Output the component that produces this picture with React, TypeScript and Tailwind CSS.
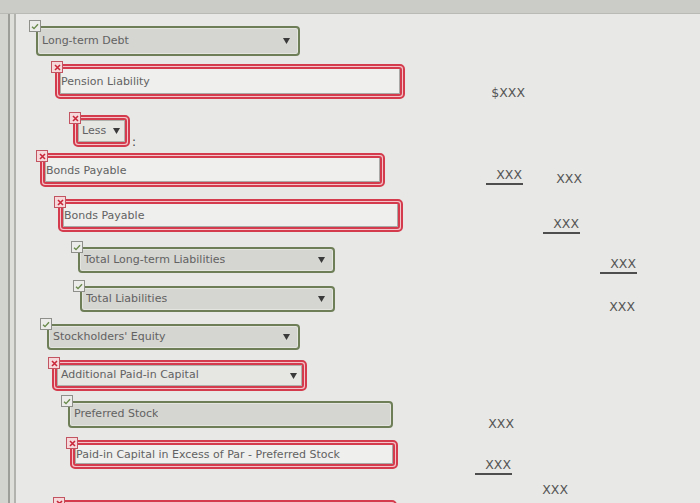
import React from 'react';

type Kind = 'gsel' | 'ginp' | 'rinp' | 'rsel';

interface Amount {
  col: 1 | 2 | 3;
  text: string;
  mt: string;
  pr: string;
  line?: boolean;
}

interface RowData {
  h: string;
  ml: string;
  mt: string;
  w: string;
  bh: string;
  kind: Kind;
  label: string;
  colon?: boolean;
  amounts?: Amount[];
}

const rows: RowData[] = [
  { h: 'h-[40px]', ml: 'ml-[20px]', mt: 'mt-[6px]', w: 'w-[264px]', bh: 'h-[30px]', kind: 'gsel', label: 'Long-term Debt' },
  {
    h: 'h-[48px]', ml: 'ml-[39px]', mt: 'mt-[4px]', w: 'w-[350px]', bh: 'h-[35px]', kind: 'rinp', label: 'Pension Liability',
    amounts: [{ col: 1, text: '$XXX', mt: 'mt-[25px]', pr: 'pr-[5px]' }],
  },
  { h: 'h-[42px]', ml: 'ml-[57px]', mt: 'mt-[7px]', w: 'w-[57px]', bh: 'h-[32px]', kind: 'rsel', label: 'Less', colon: true },
  {
    h: 'h-[45px]', ml: 'ml-[24px]', mt: 'mt-[3px]', w: 'w-[345px]', bh: 'h-[34px]', kind: 'rinp', label: 'Bonds Payable',
    amounts: [
      { col: 1, text: 'XXX', mt: 'mt-[17px]', pr: 'pr-[7px]', line: true },
      { col: 2, text: 'XXX', mt: 'mt-[21px]', pr: 'pr-[6px]' },
    ],
  },
  {
    h: 'h-[43px]', ml: 'ml-[42px]', mt: 'mt-[4px]', w: 'w-[345px]', bh: 'h-[33px]', kind: 'rinp', label: 'Bonds Payable',
    amounts: [{ col: 2, text: 'XXX', mt: 'mt-[21px]', pr: 'pr-[8px]', line: true }],
  },
  {
    h: 'h-[39px]', ml: 'ml-[62px]', mt: 'mt-[9px]', w: 'w-[257px]', bh: 'h-[26px]', kind: 'gsel', label: 'Total Long-term Liabilities',
    amounts: [{ col: 3, text: 'XXX', mt: 'mt-[18px]', pr: 'pr-[5px]', line: true }],
  },
  {
    h: 'h-[39px]', ml: 'ml-[64px]', mt: 'mt-[9px]', w: 'w-[255px]', bh: 'h-[26px]', kind: 'gsel', label: 'Total Liabilities',
    amounts: [{ col: 3, text: 'XXX', mt: 'mt-[22px]', pr: 'pr-[7px]' }],
  },
  { h: 'h-[36px]', ml: 'ml-[31px]', mt: 'mt-[8px]', w: 'w-[253px]', bh: 'h-[26px]', kind: 'gsel', label: "Stockholders' Equity" },
  { h: 'h-[41px]', ml: 'ml-[36px]', mt: 'mt-[8px]', w: 'w-[255px]', bh: 'h-[31px]', kind: 'rsel', label: 'Additional Paid-in Capital' },
  {
    h: 'h-[40px]', ml: 'ml-[52px]', mt: 'mt-[8px]', w: 'w-[325px]', bh: 'h-[27px]', kind: 'ginp', label: 'Preferred Stock',
    amounts: [{ col: 1, text: 'XXX', mt: 'mt-[23px]', pr: 'pr-[16px]' }],
  },
  {
    h: 'h-[45px]', ml: 'ml-[54px]', mt: 'mt-[7px]', w: 'w-[328px]', bh: 'h-[29px]', kind: 'rinp', label: 'Paid-in Capital in Excess of Par - Preferred Stock',
    amounts: [{ col: 1, text: 'XXX', mt: 'mt-[24px]', pr: 'pr-[18px]', line: true }],
  },
  {
    h: 'h-[60px]', ml: 'ml-[41px]', mt: 'mt-[22px]', w: 'w-[340px]', bh: 'h-[30px]', kind: 'rinp', label: '',
    amounts: [{ col: 2, text: 'XXX', mt: 'mt-[4px]', pr: 'pr-[20px]' }],
  },
];

function Arrow() {
  return (
    <svg width="7" height="6" viewBox="0 0 7 6" className="shrink-0">
      <path d="M0 0 H7 L3.5 6 Z" fill="#3a3a3a" />
    </svg>
  );
}

function CheckBadge() {
  return (
    <div className="absolute -left-[7px] -top-[6px] z-10 flex h-[12px] w-[12px] items-center justify-center border border-[#8e8e8b] bg-[#ececea]">
      <svg width="8" height="7" viewBox="0 0 8 7">
        <path d="M1 3.8 L3 5.6 L7 1.2" fill="none" stroke="#6a8a4c" strokeWidth="1.4" />
      </svg>
    </div>
  );
}

function XBadge() {
  return (
    <div className="absolute -left-[4px] -top-[3px] z-10 flex h-[12px] w-[12px] items-center justify-center border border-[#c25462] bg-[#f6d8db]">
      <svg width="7" height="7" viewBox="0 0 7 7">
        <path d="M1 1 L6 6 M6 1 L1 6" fill="none" stroke="#c9283b" strokeWidth="1.6" />
      </svg>
    </div>
  );
}

function Field({ kind, label }: { kind: Kind; label: string }) {
  if (kind === 'gsel' || kind === 'ginp') {
    return (
      <div className="flex h-full w-full items-center justify-between rounded-[4px] border-2 border-[#6e7f58] bg-[#d5d5d1] pl-[4px] pr-[8px] shadow-[inset_0_0_0_1px_#e4e4e0]">
        <span className="truncate">{label}</span>
        {kind === 'gsel' && <Arrow />}
      </div>
    );
  }
  return (
    <div className="h-full w-full rounded-[5px] border-2 border-[#d43b4c] bg-[#f3c4c9] p-[1px]">
      <div className="h-full w-full rounded-[3px] border-2 border-[#d43b4c]">
        <div
          className={
            kind === 'rsel'
              ? 'flex h-full items-center justify-between gap-[4px] border border-[#b0b0ad] bg-[#e6e6e3] pl-[3px] pr-[4px]'
              : 'flex h-full items-center border-l border-[#b0b0ad] bg-[#efefed] pt-[2px] shadow-[inset_-1px_-1px_0_#a9a9a7]'
          }
        >
          <span className="whitespace-nowrap">{label}</span>
          {kind === 'rsel' && <Arrow />}
        </div>
      </div>
    </div>
  );
}

function AmountCell({ a }: { a?: Amount }) {
  if (!a) return <div />;
  return (
    <div className={`text-right ${a.pr}`}>
      <span
        className={
          a.line
            ? `inline-block ${a.mt} border-b-2 border-[#4e4e4e] pl-[10px] pr-[1px] leading-[16px]`
            : `inline-block ${a.mt} leading-[16px]`
        }
      >
        {a.text}
      </span>
    </div>
  );
}

export default function App() {
  return (
    <div className="flex h-[503px] w-[700px] flex-col overflow-hidden bg-[#e8e8e6] font-['DejaVu_Sans',sans-serif] text-[#5c5c5c]">
      <div className="h-[14px] shrink-0 border-b border-[#b9b9b6] bg-[#cbcbc8]" />
      <div className="flex flex-1">
        <div className="flex w-[16px] shrink-0">
          <div className="w-[8px] bg-[#d3d3d0]" />
          <div className="w-[2px] bg-[#9d9d9a]" />
          <div className="w-[4px] bg-[#dededb]" />
          <div className="w-[2px] bg-[#b2b2af]" />
        </div>
        <div className="flex-1 pt-[6px]">
          {rows.map((r, i) => {
            const find = (c: 1 | 2 | 3) => r.amounts?.find((a) => a.col === c);
            const ok = r.kind === 'gsel' || r.kind === 'ginp';
            return (
              <div key={i} className={`grid grid-cols-[454px_60px_58px_54px] ${r.h} text-[12.5px] text-[#555]`}>
                <div className="flex items-start text-[11px] text-[#626262]">
                  <div className={`relative shrink-0 ${r.ml} ${r.mt} ${r.w} ${r.bh}`}>
                    {ok ? <CheckBadge /> : <XBadge />}
                    <Field kind={r.kind} label={r.label} />
                  </div>
                  {r.colon && <span className="ml-[2px] mt-[28px] text-[12px] leading-none text-[#444]">:</span>}
                </div>
                <AmountCell a={find(1)} />
                <AmountCell a={find(2)} />
                <AmountCell a={find(3)} />
              </div>
            );
          })}
        </div>
      </div>
    </div>
  );
}
